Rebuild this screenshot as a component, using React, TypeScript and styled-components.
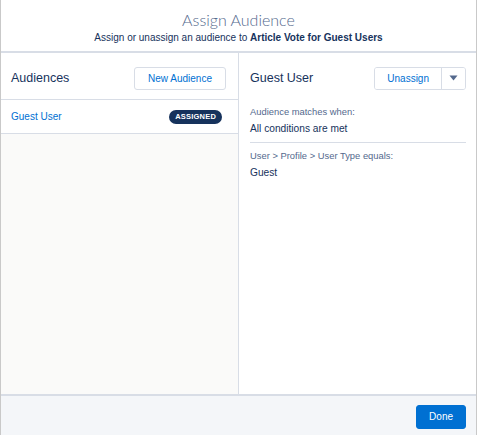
import React from "react";
import styled, { createGlobalStyle } from "styled-components";

const GlobalStyle = createGlobalStyle`
  html, body {
    margin: 0;
    padding: 0;
    background: #ffffff;
  }
  body {
    font-family: "Liberation Sans", Arial, sans-serif;
    color: #16325c;
  }
`;

const Modal = styled.div`
  width: 477px;
  height: 435px;
  box-sizing: border-box;
  border-left: 1px solid #c9c9c9;
  border-right: 1px solid #c9c9c9;
  display: flex;
  flex-direction: column;
  background: #fff;
`;

const Header = styled.div`
  height: 40px;
  padding-top: 11px;
  border-bottom: 2px solid #d8dde6;
  display: flex;
  flex-direction: column;
  align-items: center;
`;

const Title = styled.h2`
  margin: 0;
  font-family: Lato, "Liberation Sans", sans-serif;
  font-size: 16px;
  font-weight: 300;
  color: #54698d;
  line-height: 18px;
`;

const Subtitle = styled.p`
  margin: 2px 0 0;
  font-size: 10px;
  color: #16325c;
  line-height: 14px;
  strong {
    font-weight: 700;
  }
`;

const Body = styled.div`
  flex: 1;
  display: flex;
  min-height: 0;
`;

const LeftPane = styled.div`
  width: 237px;
  border-right: 1px solid #d8dde6;
  background: #fafaf9;
  display: flex;
  flex-direction: column;
`;

const RightPane = styled.div`
  flex: 1;
  background: #fff;
  display: flex;
  flex-direction: column;
  padding: 0 10px 0 11px;
`;

const PaneHeader = styled.div<{ $divided?: boolean }>`
  height: 42px;
  padding-top: 4px;
  display: flex;
  align-items: center;
  justify-content: space-between;
  background: #fff;
  padding-left: ${(p) => (p.$divided ? "10px" : "0")};
  padding-right: ${(p) => (p.$divided ? "12px" : "0")};
  border-bottom: ${(p) => (p.$divided ? "1px solid #d8dde6" : "none")};
`;

const PaneTitle = styled.span`
  font-size: 12.5px;
  color: #16325c;
`;

const OutlineButton = styled.button`
  height: 23px;
  padding: 0 13px;
  border: 1px solid #d8dde6;
  border-radius: 3px;
  background: #fff;
  color: #0070d2;
  font-family: inherit;
  font-size: 10px;
  cursor: pointer;
`;

const ButtonGroup = styled.div`
  display: flex;
  height: 23px;
  border: 1px solid #d8dde6;
  border-radius: 3px;
  box-sizing: border-box;
  overflow: hidden;
`;

const GroupButton = styled.button<{ $icon?: boolean }>`
  height: 100%;
  border: none;
  border-left: ${(p) => (p.$icon ? "1px solid #d8dde6" : "none")};
  background: #fff;
  color: #0070d2;
  font-family: inherit;
  font-size: 10px;
  padding: ${(p) => (p.$icon ? "0" : "0 12px")};
  width: ${(p) => (p.$icon ? "24px" : "auto")};
  display: flex;
  align-items: center;
  justify-content: center;
`;

const Row = styled.div`
  height: 33px;
  display: flex;
  align-items: center;
  justify-content: space-between;
  padding: 0 16px 0 10px;
  background: #fff;
  border-bottom: 1px solid #d8dde6;
`;

const RowLink = styled.span`
  font-size: 10px;
  color: #0070d2;
`;

const Badge = styled.span`
  background: #16325c;
  color: #fff;
  font-size: 7.5px;
  font-weight: 700;
  letter-spacing: 0.2px;
  padding: 0 6px;
  height: 14px;
  line-height: 14px;
  border-radius: 7px;
`;

const Section = styled.div<{ $divided?: boolean }>`
  padding: ${(p) => (p.$divided ? "6px 0 0" : "6px 0 6px")};
  border-bottom: ${(p) => (p.$divided ? "none" : "1px solid #d8dde6")};
`;

const Label = styled.div`
  font-size: 9.4px;
  color: #54698d;
  line-height: 14px;
`;

const Value = styled.div`
  font-size: 10.2px;
  color: #16325c;
  line-height: 14px;
  margin-top: 3px;
`;

const Footer = styled.div`
  height: 37px;
  padding-top: 2px;
  border-top: 2px solid #d8dde6;
  background: #f4f6f9;
  display: flex;
  align-items: center;
  justify-content: flex-end;
  padding-right: 10px;
`;

const BrandButton = styled.button`
  height: 24px;
  padding: 0 12px;
  border: 1px solid #0070d2;
  border-radius: 3px;
  background: #0070d2;
  color: #fff;
  font-family: inherit;
  font-size: 10px;
`;

export default function App() {
  return (
    <>
      <GlobalStyle />
      <Modal>
        <Header>
          <Title>Assign Audience</Title>
          <Subtitle>
            Assign or unassign an audience to <strong>Article Vote for Guest Users</strong>
          </Subtitle>
        </Header>
        <Body>
          <LeftPane>
            <PaneHeader $divided>
              <PaneTitle>Audiences</PaneTitle>
              <OutlineButton>New Audience</OutlineButton>
            </PaneHeader>
            <Row>
              <RowLink>Guest User</RowLink>
              <Badge>ASSIGNED</Badge>
            </Row>
          </LeftPane>
          <RightPane>
            <PaneHeader>
              <PaneTitle>Guest User</PaneTitle>
              <ButtonGroup>
                <GroupButton>Unassign</GroupButton>
                <GroupButton $icon aria-label="More">
                  <svg width="9" height="6" viewBox="0 0 9 6">
                    <path d="M0.5 0.5h8L4.5 5.5z" fill="#54698d" />
                  </svg>
                </GroupButton>
              </ButtonGroup>
            </PaneHeader>
            <Section>
              <Label>Audience matches when:</Label>
              <Value>All conditions are met</Value>
            </Section>
            <Section $divided>
              <Label>User &gt; Profile &gt; User Type equals:</Label>
              <Value>Guest</Value>
            </Section>
          </RightPane>
        </Body>
        <Footer>
          <BrandButton>Done</BrandButton>
        </Footer>
      </Modal>
    </>
  );
}
